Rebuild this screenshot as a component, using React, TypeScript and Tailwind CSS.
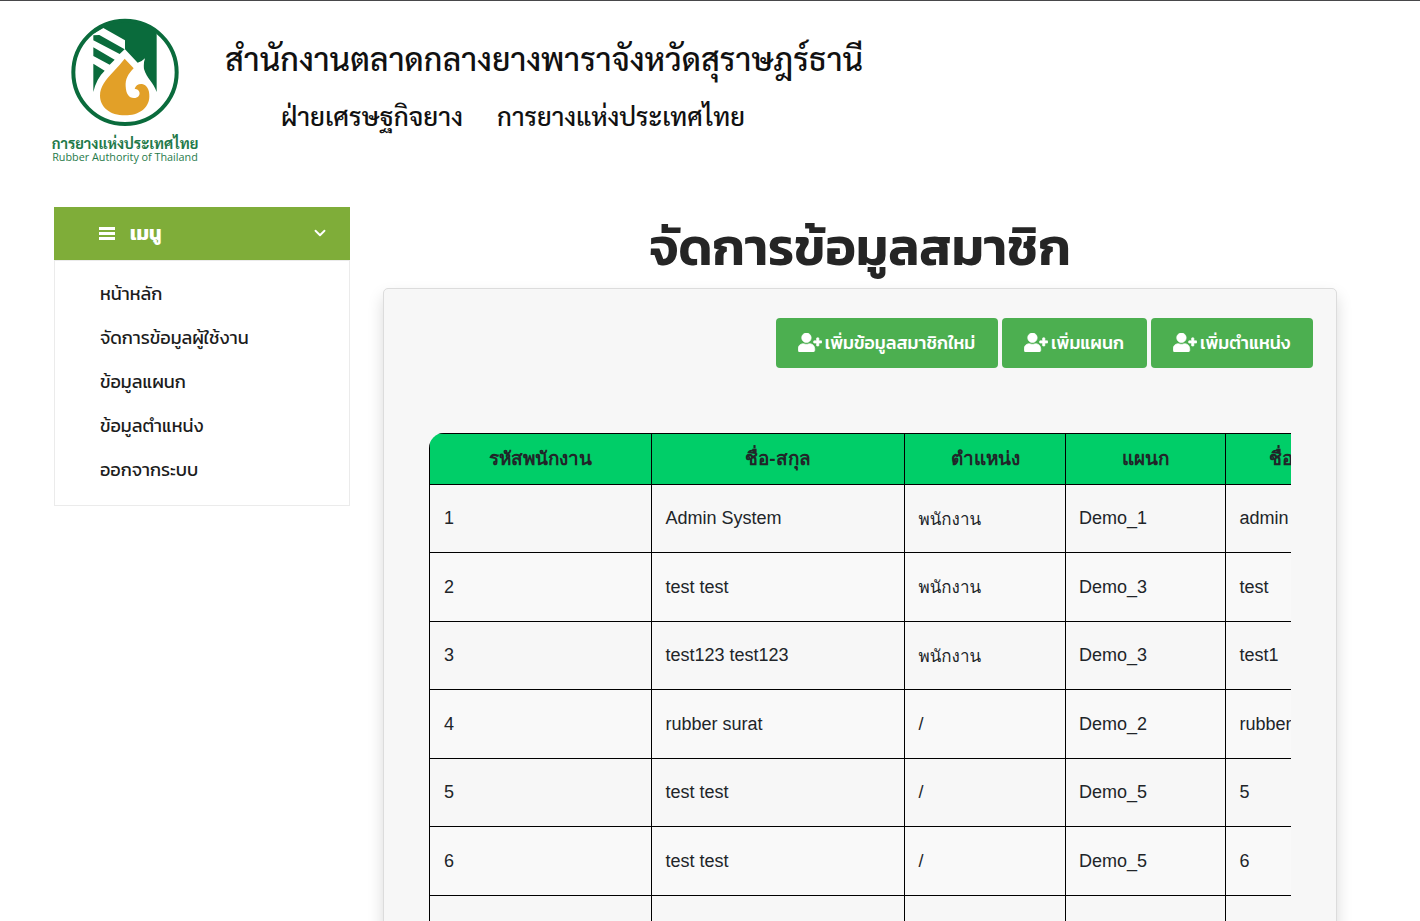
import React from "react";
import { FaUserPlus } from "react-icons/fa";
import { FiChevronDown } from "react-icons/fi";

const menu = ["หน้าหลัก", "จัดการข้อมูลผู้ใช้งาน", "ข้อมูลแผนก", "ข้อมูลตำแหน่ง", "ออกจากระบบ"];
const actions = [
  { label: "เพิ่มข้อมูลสมาชิกใหม่", width: "w-[222px]" },
  { label: "เพิ่มแผนก", width: "w-[145px]" },
  { label: "เพิ่มตำแหน่ง", width: "w-[162px]" },
];
const heads = ["รหัสพนักงาน", "ชื่อ-สกุล", "ตำแหน่ง", "แผนก", "ชื่อผู้ใช้"];
const rows = [
  ["1", "Admin System", "พนักงาน", "Demo_1", "admin"],
  ["2", "test test", "พนักงาน", "Demo_3", "test"],
  ["3", "test123 test123", "พนักงาน", "Demo_3", "test1"],
  ["4", "rubber surat", "/", "Demo_2", "rubber"],
  ["5", "test test", "/", "Demo_5", "5"],
  ["6", "test test", "/", "Demo_5", "6"],
  ["", "", "", "", ""],
];
const cellPadding = ["pl-[14px]", "pl-[13.5px]", "pl-[13.5px]", "pl-[13px]", "pl-[13.5px]"];

function Logo() {
  return (
    <svg className="ml-[19px] block h-[110px] w-[110px]" viewBox="90 50 330 330">
      <path d="M160 100C205 50 300 43 350 100V275C341 246 320 235 312 206Q310 188 315 174Q306 184 293 187L255 147V120L190 83L166 97Z" fill="#0a6b3c" />
      <path d="M160 105L178 104L254 147L239 161L160 120ZM160 141L224 178L209 193L160 167ZM160 190L194 211Q169 235 160 275Z" fill="#0a6b3c" />
      <path d="M254 175L281 204C263 223 256 236 257 258C258 280 266 293 282 293C294 293 301 285 298 275C296 268 289 265 284 266C286 256 295 250 306 251C320 253 329 268 328 289C327 324 296 345 255 345C210 345 180 320 180 286C180 258 197 239 222 212Q240 193 254 175Z" fill="#e2a028" />
      <circle cx="255" cy="216" r="155" fill="none" stroke="#0a6b3c" strokeWidth="12" />
    </svg>
  );
}

export default function App() {
  return (
    <div className="flex h-[921px] w-full flex-col overflow-hidden border-t border-[#48484a] bg-white font-['Kanit','Noto_Sans_Thai',sans-serif] text-[#1c1c1c]">
      <header className="flex h-[206px] shrink-0 pl-[51px] pt-[16px]">
        <div className="w-[148px] whitespace-nowrap text-[#1f7a4a]">
          <Logo />
          <div className="mt-[7px] text-center font-['Sarabun','Noto_Sans_Thai',sans-serif] text-[14.7px] font-bold leading-[18px]">การยางแห่งประเทศไทย</div>
          <div className="-mt-[2px] text-center font-['Open_Sans',sans-serif] text-[10.8px] leading-[14px]">Rubber Authority of Thailand</div>
        </div>
        <div className="whitespace-nowrap pl-[26px] pt-[16px] font-['Sarabun','Noto_Sans_Thai',sans-serif] font-medium text-[#111]">
          <div className="text-[32.1px] leading-[50px]">สำนักงานตลาดกลางยางพาราจังหวัดสุราษฎร์ธานี</div>
          <div className="mt-[12px] flex items-baseline gap-[34px] pl-[56px] leading-[40px]">
            <span className="text-[25.9px]">ฝ่ายเศรษฐกิจยาง</span>
            <span className="text-[25.5px]">การยางแห่งประเทศไทย</span>
          </div>
        </div>
      </header>

      <div className="flex min-h-0 flex-1">
        <aside className="ml-[54px] w-[296px] shrink-0">
          <div className="flex h-[53px] items-center bg-[#7fad39] pl-[45px] pr-[21px] text-white">
            <svg className="h-[13px] w-[16px] shrink-0" viewBox="0 0 16 13" fill="currentColor"><path d="M0 0h16v3H0zM0 5h16v3H0zM0 10h16v3H0z" /></svg>
            <span className="ml-[15px] text-[19.8px] font-bold">เมนู</span>
            <FiChevronDown className="mb-[2px] ml-auto size-[18px]" strokeWidth={2.5} />
          </div>
          <nav className="h-[246px] border border-[#ebebeb] pl-[45px] pt-[11px]">
            {menu.map((m) => (
              <a key={m} className="block h-[44px] whitespace-nowrap text-[18px] leading-[44px]">{m}</a>
            ))}
          </nav>
        </aside>

        <main className="ml-[33px] flex w-[954px] shrink-0 flex-col">
          <h1 className="h-[81px] shrink-0 whitespace-nowrap text-center text-[51.7px] font-semibold leading-[79px] text-[#252525]">จัดการข้อมูลสมาชิก</h1>
          <section className="h-[700px] shrink-0 rounded-[5px] border border-[#dcdcdc] bg-[#f7f7f7] shadow-[0_8px_16px_rgba(0,0,0,0.15)]">
            <div className="flex justify-end gap-1 pr-[23px] pt-[29px]">
              {actions.map((a) => (
                <button key={a.label} className={`flex h-[50px] items-center justify-center gap-[3px] whitespace-nowrap rounded-[4px] bg-[#4caf50] pr-px text-[17.8px] font-medium text-white ${a.width}`}>
                  <FaUserPlus className="mb-[2px] h-[19px] w-[24px]" strokeWidth={16} />
                  <span>{a.label}</span>
                </button>
              ))}
            </div>
            <div className="ml-[45px] mt-[65px] w-[862px] overflow-hidden rounded-tl-[15px] font-['Liberation_Sans','Loma',sans-serif] text-[18px] text-[#212529]">
              <div className="w-[1100px] border-l border-black">
                <div className="grid h-[51px] grid-cols-[222px_253px_161px_160px_304px] border-t border-black bg-[#00ce68] font-['Liberation_Sans',sans-serif] text-[18.9px] font-bold">
                  {heads.map((h, i) => (
                    <div key={h} className={`flex items-center whitespace-nowrap pt-px ${i < 4 ? "justify-center border-r border-black" : "pl-[43px]"}`}>{h}</div>
                  ))}
                </div>
                {rows.map((r, i) => (
                  <div key={i} className={`grid grid-cols-[222px_253px_161px_160px_304px] border-t border-black ${i % 2 ? "h-[69px] bg-[#f9f9f9]" : "h-[68px]"}`}>
                    {r.map((c, j) => (
                      <div key={j} className={`flex items-center whitespace-nowrap ${j === 2 && i < 3 ? "pt-[2px] text-[17px]" : ""} ${j < 4 ? "border-r border-black" : ""} ${cellPadding[j]}`}>{c}</div>
                    ))}
                  </div>
                ))}
              </div>
            </div>
          </section>
        </main>
      </div>
    </div>
  );
}
